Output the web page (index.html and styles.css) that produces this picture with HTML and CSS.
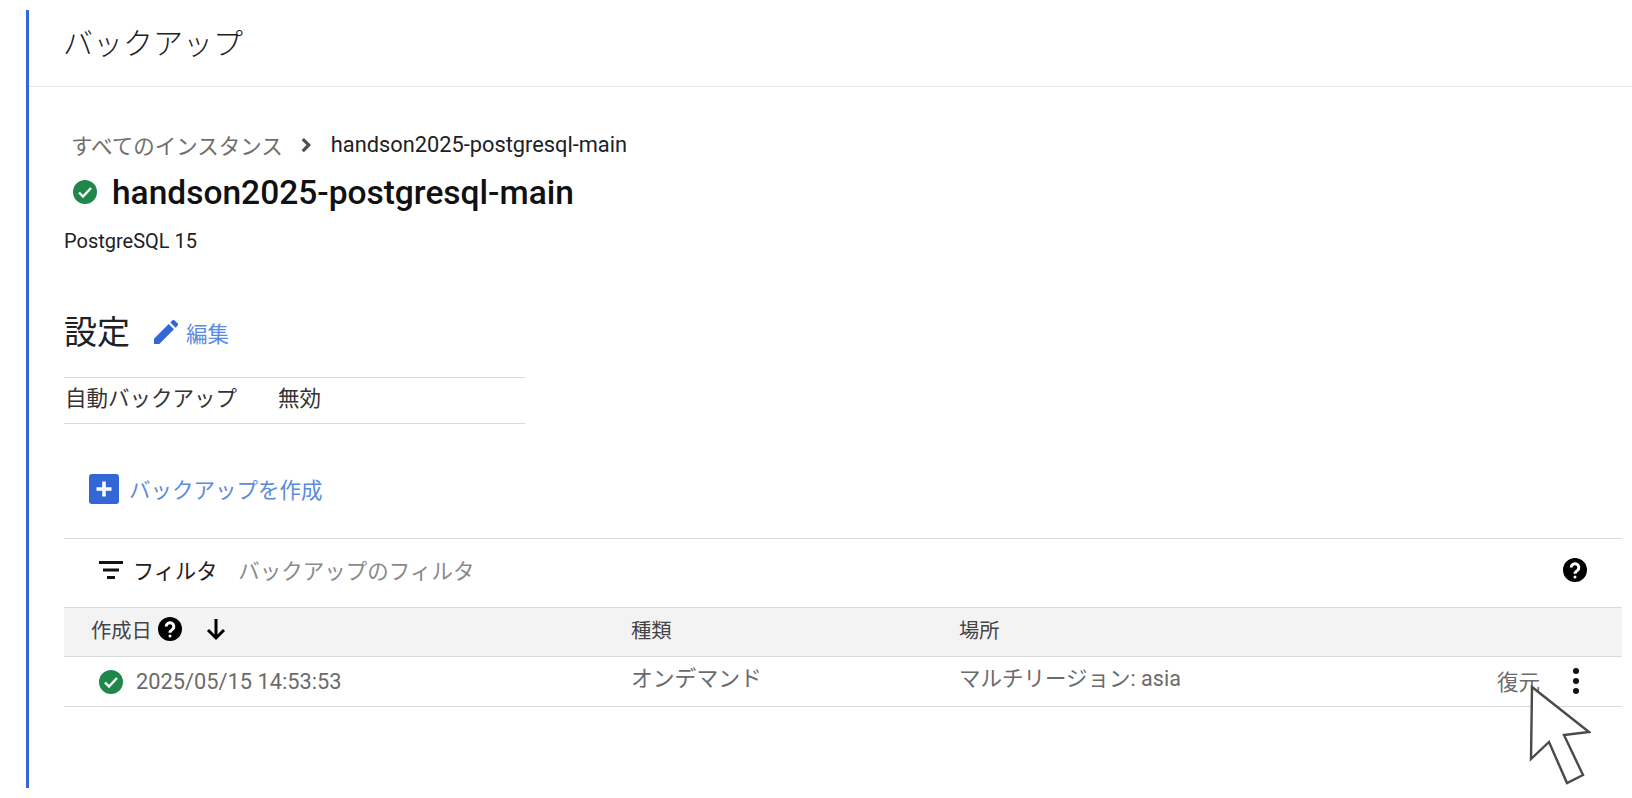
FILE: index.html
```html
<!DOCTYPE html>
<html lang="ja">
<head>
<meta charset="utf-8">
<title>バックアップ</title>
<link rel="stylesheet" href="styles.css">
</head>
<body>
<main class="panel">
  <header class="page-header"><h1>バックアップ</h1></header>
  <div class="content">
    <nav class="crumbs">
      <span class="crumb-link">すべてのインスタンス</span>
      <svg class="crumb-sep" viewBox="0 0 24 24"><path d="M7.500 5.500 10.500 2.500 20 12l-9.500 9.500-3-3 6.500-6.500z"/></svg>
      <span>handson2025-postgresql-main</span>
    </nav>
    <div class="instance">
      <svg class="ok ok-lg" viewBox="0 0 24 24"><circle cx="12" cy="12" r="12"/><path class="tick" d="M6 12.500l4 4 8-8.500"/></svg>
      <h2>handson2025-postgresql-main</h2>
    </div>
    <p class="version">PostgreSQL 15</p>
    <div class="settings-head">
      <h3>設定</h3>
      <a class="link edit">
        <svg viewBox="0 0 24 24"><path d="M0 24v-5.200L14.700 4l5.300 5.300L5.300 24zM16.300 2.400 18.200.5a1.800 1.800 0 0 1 2.500 0l2.800 2.800a1.800 1.800 0 0 1 0 2.500l-1.900 1.900z"/></svg>
        編集
      </a>
    </div>
    <div class="settings-row"><span class="s-key">自動バックアップ</span><span>無効</span></div>
    <a class="link create">
      <svg viewBox="0 0 30 30"><rect width="30" height="30" rx="3"/><path class="plus" d="M15 7.500v15M7.500 15h15"/></svg>
      <span class="create-label">バックアップを作成</span>
    </a>
    <section class="table">
      <div class="filter">
        <svg class="filter-icon" viewBox="0 0 24 24"><path d="M0 3h24v3H0zM4 10.500h16v3H4zM8 18h8v3H8z"/></svg>
        <span class="filter-label">フィルタ</span>
        <span class="filter-hint">バックアップのフィルタ</span>
        <svg class="help help-end" viewBox="0 0 24 24"><circle cx="12" cy="12" r="12"/><path class="q" d="M8.200 9.500a3.800 3.800 0 1 1 6 3.100c-1.300.9-2.200 1.600-2.200 3.100"/><circle class="qd" cx="12" cy="19" r="1.500"/></svg>
      </div>
      <div class="grid head">
        <div class="c1 head-first">作成日
          <svg class="help" viewBox="0 0 24 24"><circle cx="12" cy="12" r="12"/><path class="q" d="M8.200 9.500a3.800 3.800 0 1 1 6 3.100c-1.300.9-2.200 1.600-2.200 3.100"/><circle class="qd" cx="12" cy="19" r="1.500"/></svg>
          <svg class="arrow" viewBox="0 0 24 24"><path d="M12 2v19M4 13l8 8 8-8"/></svg>
        </div>
        <div>種類</div>
        <div>場所</div>
        <div></div>
      </div>
      <div class="grid row">
        <div class="c1 row-first">
          <svg class="ok ok-sm" viewBox="0 0 24 24"><circle cx="12" cy="12" r="12"/><path class="tick" d="M6 12.500l4 4 8-8.500"/></svg>
          <span>2025/05/15 14:53:53</span>
        </div>
        <div class="raised">オンデマンド</div>
        <div class="raised region">マルチリージョン: asia</div>
        <div class="actions">
          <span class="restore">復元</span>
          <svg class="more" viewBox="0 0 6 26"><circle cx="3" cy="3" r="3"/><circle cx="3" cy="13" r="3"/><circle cx="3" cy="23" r="3"/></svg>
        </div>
      </div>
    </section>
  </div>
  <svg class="cursor" viewBox="0 0 62 100"><path d="M3 2 60 47 35 50 54 90 38 98 20 57 2 74z"/></svg>
</main>
</body>
</html>
```
FILE: styles.css
```css
* { box-sizing: border-box; }
html, body { margin: 0; height: 100%; background: #fff; overflow: hidden; }
body {
  font-family: Roboto, "Noto Sans CJK JP", sans-serif;
  color: #202124;
  padding: 10px 0 10px 26px;
}
h1, h2, h3, p { margin: 0; font-weight: 400; }
svg { display: block; flex: none; }

.panel {
  position: relative;
  height: 100%;
  border-left: 3px solid #3367d6;
}
.page-header {
  height: 77px;
  border-bottom: 1px solid #e6e6e6;
  padding: 12px 0 0 34px;
}
.page-header h1 { font-size: 30px; line-height: 44px; font-weight: 300; }

.content { padding: 0 10px 0 35px; }

.crumbs {
  display: flex;
  align-items: center;
  height: 30px;
  margin-top: 44px;
  padding: 0 0 3px 7px;
  font-size: 21.800px;
  color: #202124;
}
.crumb-link { color: #6f6f6f; font-size: 21.500px; }
.crumb-sep { width: 18px; height: 18px; margin: 0 17px 0 13px; fill: #4f4f4f; }

.instance { display: flex; align-items: center; height: 42px; margin-top: 10px; padding-left: 9px; }
.instance h2 { font-size: 33.500px; font-weight: 500; color: #111; margin-left: 15px; }
.ok circle { fill: #20864a; }
.tick { fill: none; stroke: #fff; stroke-width: 2.400; }
.ok-lg { width: 24px; height: 24px; }
.ok-sm { width: 24px; height: 24px; }

.version { font-size: 20px; line-height: 24px; margin-top: 16px; }

.settings-head { display: flex; align-items: center; height: 44px; margin-top: 55px; }
.settings-head h3 { font-size: 33px; font-weight: 400; }
.link { color: #5b8be0; display: flex; align-items: center; font-size: 21.500px; }
.edit { margin: 4px 0 0 24px; gap: 8px; }
.edit svg { width: 24px; height: 24px; fill: #3367d6; }

.settings-row {
  display: flex;
  align-items: center;
  width: 461px;
  height: 47px;
  margin-top: 25px;
  border-top: 1px solid #dadada;
  border-bottom: 1px solid #dadada;
  font-size: 21.500px;
  padding: 0 0 8px 1px;
  color: #333;
}
.s-key { width: 213px; }

.create { margin: 50px 0 0 25px; height: 30px; gap: 10px; }
.create svg { width: 30px; height: 30px; }
.create rect { fill: #3367d6; }
.create-label { padding-bottom: 2px; }
.plus { fill: none; stroke: #fff; stroke-width: 3.600; }

.table { margin-top: 34px; }
.filter {
  display: flex;
  align-items: center;
  height: 69px;
  border-top: 1px solid #dadada;
  padding: 0 35px 7px 35px;
  font-size: 21.200px;
}
.filter-icon { width: 24px; height: 24px; fill: #111; }
.filter-label { margin-left: 10px; }
.filter-hint { margin-left: 21px; color: #8a8a8a; font-size: 21.500px; }
.help { width: 24px; height: 24px; }
.help > circle:first-child { fill: #000; }
.q { fill: none; stroke: #fff; stroke-width: 3; }
.qd { fill: #fff; }
.help-end { margin-left: auto; }

.grid {
  display: grid;
  grid-template-columns: 567px 328px 1fr 140px;
  align-items: center;
}
.head { height: 50px; padding-bottom: 6px; font-size: 20.300px; background: #f3f3f3; border-top: 1px solid #dadada; border-bottom: 1px solid #dadada; color: #444; }
.row { height: 50px; border-bottom: 1px solid #dadada; color: #6b6b6b; font-size: 21.800px; }
.c1 { display: flex; align-items: center; }
.head-first { padding-left: 27px; gap: 6px; }
.arrow { width: 24px; height: 24px; margin-left: 16px; fill: none; stroke: #000; stroke-width: 3; }
.row-first { padding-left: 35px; gap: 13px; }
.raised { padding-bottom: 10px; }
.region { font-size: 21.500px; }
.actions { display: flex; align-items: center; justify-content: flex-end; padding: 0 41px 2px 0; }
.restore { margin-right: 31px; font-size: 21.500px; }
.more { width: 10px; height: 26px; fill: #111; }

.cursor {
  position: absolute;
  left: 1500px;
  top: 675px;
  width: 62px;
  height: 100px;
  fill: #fff;
  stroke: #4a4a4a;
  stroke-width: 2.400;
}
```
